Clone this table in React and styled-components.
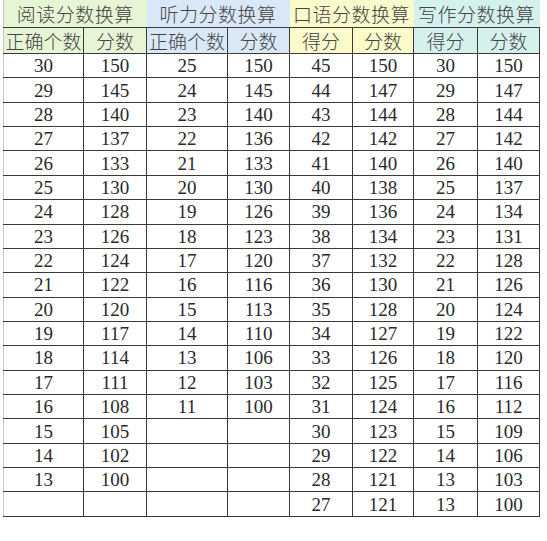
import React from 'react'
import styled, { createGlobalStyle } from 'styled-components'

const GlobalStyle = createGlobalStyle`
  html, body {
    margin: 0;
    padding: 0;
    background: #ffffff;
  }
`

const groups = [
  { title: '阅读分数换算', bg: '#e6f5d4', cols: ['正确个数', '分数'] },
  { title: '听力分数换算', bg: '#d9e8f6', cols: ['正确个数', '分数'] },
  { title: '口语分数换算', bg: '#fafacb', cols: ['得分', '分数'] },
  { title: '写作分数换算', bg: '#d4f1ee', cols: ['得分', '分数'] },
]

const widths = [80, 63, 81, 62, 63, 61, 64, 62]

const reading = [
  [30, 150], [29, 145], [28, 140], [27, 137], [26, 133], [25, 130], [24, 128],
  [23, 126], [22, 124], [21, 122], [20, 120], [19, 117], [18, 114], [17, 111],
  [16, 108], [15, 105], [14, 102], [13, 100],
]
const listening = [
  [25, 150], [24, 145], [23, 140], [22, 136], [21, 133], [20, 130], [19, 126],
  [18, 123], [17, 120], [16, 116], [15, 113], [14, 110], [13, 106], [12, 103],
  [11, 100],
]
const speaking = [
  [45, 150], [44, 147], [43, 144], [42, 142], [41, 140], [40, 138], [39, 136],
  [38, 134], [37, 132], [36, 130], [35, 128], [34, 127], [33, 126], [32, 125],
  [31, 124], [30, 123], [29, 122], [28, 121], [27, 121],
]
const writing = [
  [30, 150], [29, 147], [28, 144], [27, 142], [26, 140], [25, 137], [24, 134],
  [23, 131], [22, 128], [21, 126], [20, 124], [19, 122], [18, 120], [17, 116],
  [16, 112], [15, 109], [14, 106], [13, 103], [13, 100],
]

const ROWS = 19

const Page = styled.div`
  padding-left: 3px;
`

const Sheet = styled.table`
  border-collapse: collapse;
  table-layout: fixed;
  width: 536px;
  border-left: 1px solid #c8c8c8;
`

const GroupCell = styled.th`
  height: 27px;
  padding: 0;
  background: ${(p) => p.$bg};
  border-bottom: 1px solid #3a3a3a;
  font-family: "Noto Sans CJK SC", sans-serif;
  font-weight: 300;
  font-size: 19px;
  letter-spacing: 0.5px;
  line-height: 27px;
  color: #444444;
  text-align: center;
  white-space: nowrap;
`

const ColCell = styled.th`
  height: 25px;
  padding: 0;
  background: ${(p) => p.$bg};
  border-right: 1px solid #3a3a3a;
  border-bottom: 1px solid #3a3a3a;
  font-family: "Noto Sans CJK SC", sans-serif;
  font-weight: 300;
  font-size: 19px;
  line-height: 25px;
  color: #444444;
  text-align: center;
  white-space: nowrap;
`

const Cell = styled.td`
  height: 23.37px;
  padding: 0;
  border-right: 1px solid #3a3a3a;
  border-bottom: 1px solid #3a3a3a;
  font-family: "Liberation Serif", serif;
  font-size: 19px;
  line-height: 23px;
  color: #2a2a2a;
  text-align: center;
`

const columns = [reading, listening, speaking, writing]

export default function App() {
  return (
    <Page>
      <GlobalStyle />
      <Sheet>
        <colgroup>
          {widths.map((w, i) => (
            <col key={i} style={{ width: w }} />
          ))}
        </colgroup>
        <thead>
          <tr>
            {groups.map((g) => (
              <GroupCell key={g.title} colSpan={2} $bg={g.bg}>
                {g.title}
              </GroupCell>
            ))}
          </tr>
          <tr>
            {groups.map((g) =>
              g.cols.map((c, j) => (
                <ColCell key={g.title + j} $bg={g.bg}>
                  {c}
                </ColCell>
              ))
            )}
          </tr>
        </thead>
        <tbody>
          {Array.from({ length: ROWS }).map((_, r) => (
            <tr key={r}>
              {columns.map((data, k) => {
                const row = data[r]
                return (
                  <React.Fragment key={k}>
                    <Cell>{row ? row[0] : ''}</Cell>
                    <Cell>{row ? row[1] : ''}</Cell>
                  </React.Fragment>
                )
              })}
            </tr>
          ))}
        </tbody>
      </Sheet>
    </Page>
  )
}
